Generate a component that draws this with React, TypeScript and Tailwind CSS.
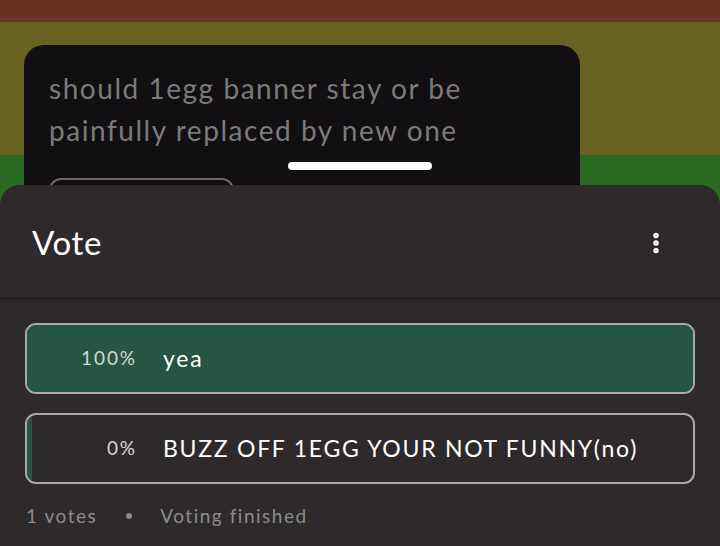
import { MoreVertical } from "lucide-react";

const options = [
  { pct: 100, label: "yea" },
  { pct: 0, label: "BUZZ OFF 1EGG YOUR NOT FUNNY(no)" },
];

function OptionRow({ pct, label }: { pct: number; label: string }) {
  return (
    <div className="relative h-[71px] rounded-[11px] border-2 border-[#a9a9a9] bg-[#2e2a2c] overflow-hidden">
      <div
        className="absolute inset-y-0 left-0 bg-[#265543]"
        style={{ width: pct === 0 ? "5px" : `${pct}%` }}
      />
      <div className="relative flex h-full items-center">
        <span className="w-[110px] text-right text-[19px] tracking-[0.1em] text-[#d6d6d6]">{pct}%</span>
        <span className="ml-[26px] text-[23px] tracking-[0.075em] text-white">{label}</span>
      </div>
    </div>
  );
}

export default function App() {
  return (
    <div
      className="relative w-[720px] h-[546px] overflow-hidden flex flex-col"
      style={{ fontFamily: "Lato, 'Noto Sans', sans-serif" }}
    >
      {/* banner behind */}
      <div className="h-[22px] bg-[#6a3222]" />
      <div className="h-[133px] bg-[#686222]" />
      <div className="flex-1 bg-[#2b6a22]" />

      {/* post card */}
      <div className="absolute left-[24px] top-[45px] w-[556px] h-[200px] rounded-[20px] bg-[#110f11] px-[25px] pt-[22px]">
        <p className="text-[28px] leading-[42px] tracking-[0.055em] text-[#7b7b7b]">
          should 1egg banner stay or be
          <br />
          painfully replaced by new one
        </p>
        <div className="mt-[27px] h-[40px] w-[185px] rounded-[12px] border-2 border-[#6b6b6b]" />
      </div>

      <div className="absolute left-[288px] top-[162px] h-[8px] w-[144px] rounded-full bg-white" />

      {/* bottom sheet */}
      <div className="absolute left-0 top-[185px] w-[720px] h-[361px] rounded-t-[20px] bg-[#2e2a2c] flex flex-col">
        <div className="h-[112px] flex items-center justify-between pl-[32px] pr-[51px] pt-[4px]">
          <span className="text-[33px] tracking-[0.02em] text-white">Vote</span>
          <MoreVertical className="h-[26px] w-[26px] text-white" strokeWidth={3} />
        </div>
        <div className="h-[7px] bg-gradient-to-b from-[#232022] to-[#2e2a2c]" />
        <div className="px-[25px] pt-[19px] flex flex-col gap-[19px]">
          {options.map((o) => (
            <OptionRow key={o.label} pct={o.pct} label={o.label} />
          ))}
        </div>
        <div className="mt-[18px] pl-[26px] flex items-center text-[19px] tracking-[0.08em] text-[#8c8c8c]">
          <span>1 votes</span>
          <span className="ml-[29px] h-[6px] w-[6px] rounded-full bg-[#8c8c8c]" />
          <span className="ml-[28px]">Voting finished</span>
        </div>
      </div>
    </div>
  );
}
